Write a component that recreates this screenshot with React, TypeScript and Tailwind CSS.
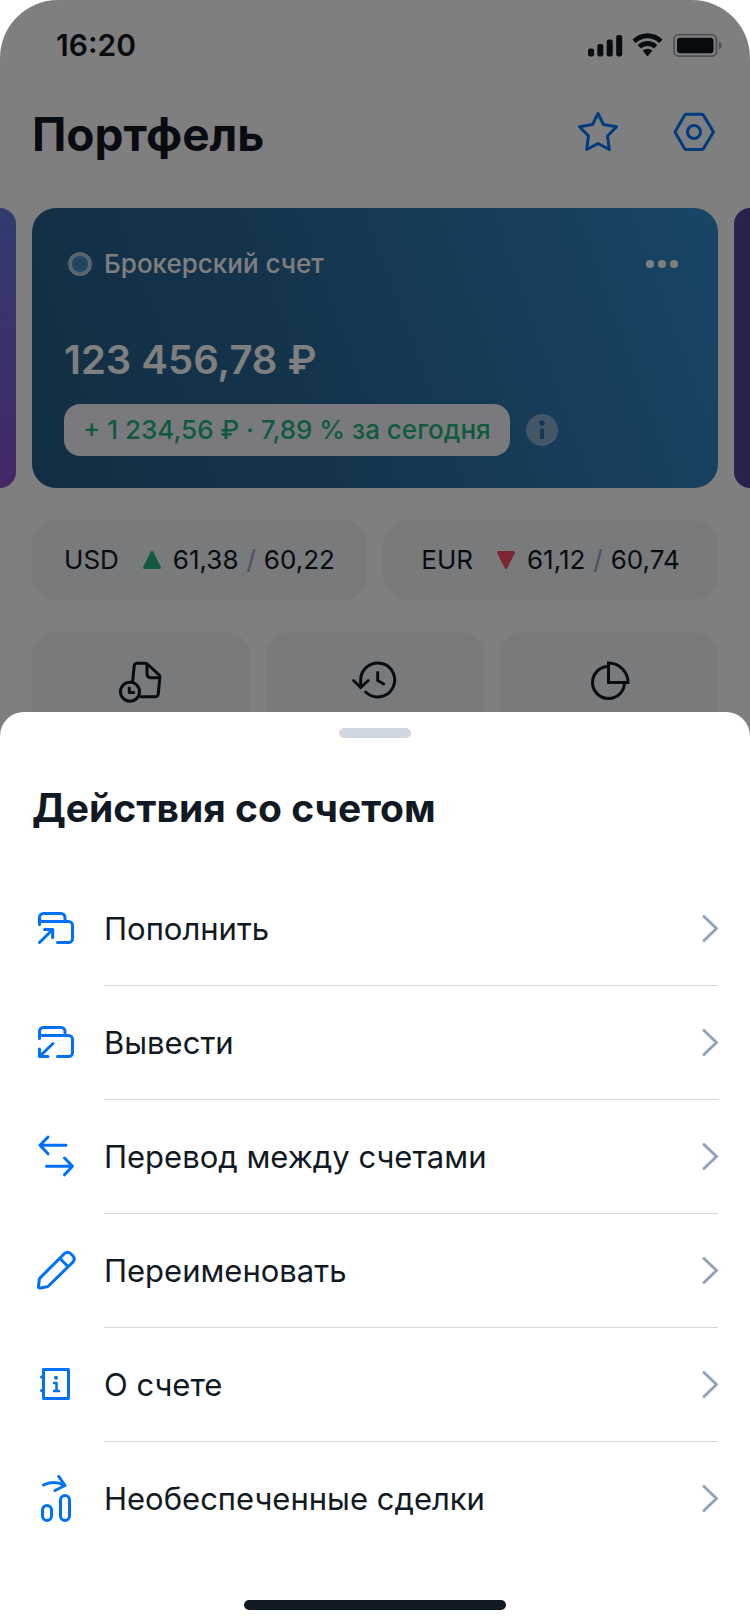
import type { ReactNode } from 'react';

const ink = 'stroke-[3] [stroke-linecap:round] [stroke-linejoin:round]';

function Icon({ children }: { children: ReactNode }) {
  return (
    <svg viewBox="0 0 48 48" fill="none" stroke="currentColor" className={`size-12 shrink-0 ${ink}`} aria-hidden="true">
      {children}
    </svg>
  );
}

const cardOutline = (
  <>
    <path d="M7.5 19.5V12.5a4 4 0 0 1 4-4H29a4 4 0 0 1 4 4V16" />
    <path d="M7.5 13.5a3 3 0 0 0 3 3H36.500a4 4 0 0 1 4 4V33.500a4 4 0 0 1-4 4H25.500" />
  </>
);

const actions = [
  {
    title: 'Пополнить',
    icon: (
      <>
        {cardOutline}
        <path d="M7.500 37.500 20.700 24.500M12.500 24.500h8.200v8" />
      </>
    ),
  },
  {
    title: 'Вывести',
    icon: (
      <>
        {cardOutline}
        <path d="M21 24.500 7.500 37.500M7.500 30v7.500h8.500" />
      </>
    ),
  },
  {
    title: 'Перевод между счетами',
    icon: <path d="M34 12.300H8M16 4 8 12.300l8 8.500M14.500 33.300h25.500M32.500 25l8 8.300-8 8.500" />,
  },
  {
    title: 'Переименовать',
    icon: (
      <>
        <path d="M8 31 32.500 6.500q3-2.600 6 0l2.500 2.500q2.600 3 0 6L16.500 39q-.6.600-1.500.800L8.500 41q-2.200.200-2-2L7.300 32.500q.2-.9.7-1.500Z" />
        <path d="m28 11.500 8 8" />
      </>
    ),
  },
  {
    title: 'О счете',
    icon: (
      <>
        <path d="M11.500 8.500h25v29h-25zM9.500 16h2M9.500 29.500h2" />
        <path d="M22 22h2.500v8M22 30h5" className="stroke-[2.500]" />
        <circle cx="24" cy="16.700" r="2" fill="currentColor" stroke="none" />
      </>
    ),
  },
  {
    title: 'Необеспеченные сделки',
    icon: (
      <>
        <path d="M11.500 10q9.500-5 21 0M26.800 1.500 33 10.500l-10 5" />
        <rect x="10.500" y="30.500" width="9" height="15" rx="4.500" />
        <rect x="28.500" y="20.500" width="9" height="25" rx="4.500" />
      </>
    ),
  },
];

const rates = [
  { code: 'USD', buy: '61,38', sell: '60,22', up: true },
  { code: 'EUR', buy: '61,12', sell: '60,74', up: false },
];

const shortcuts = [
  {
    label: 'Отложенные документы',
    icon: (
      <>
        <circle cx="13" cy="35.700" r="9.500" />
        <path d="M12.300 32v4.500h4.500" />
        <path d="M15.700 25 17.200 10q.3-2.700 3-2.700H28q1.700 0 2.900 1.200L42 18.800q1 1 .9 2.500L41.200 38q-.2 2.700-2.700 2.700H24" />
        <path d="M30 8v9.500q0 4.300 4.300 4.300H42.500" />
      </>
    ),
  },
  {
    label: 'История',
    icon: (
      <>
        <path d="M9.700 31V24A17 17 0 1 1 14.700 36" />
        <path d="m2.500 24.500 7.200 7 7.500-7M26.700 16.500v8l6 3.500" />
      </>
    ),
  },
  {
    label: 'Аналитика',
    icon: (
      <path d="M23.500 10.500a16 16 0 1 0 16 16.500M23.500 7A19.500 19.500 0 0 1 43 26.500H23.500Z" className="[stroke-linecap:butt] [stroke-linejoin:miter]" />
    ),
  },
];

function StatusBar() {
  return (
    <div className="flex h-[90px] items-center justify-between pl-14 pr-7">
      <span className="text-[30px] leading-9 font-semibold">16:20</span>
      <svg viewBox="0 0 134 24" fill="currentColor" className="h-6 w-[134px]" aria-hidden="true">
        <rect x="0" y="15.500" width="6" height="8" rx="2" />
        <rect x="9.300" y="11" width="6" height="12.500" rx="2" />
        <rect x="18.700" y="6.500" width="6" height="17" rx="2" />
        <rect x="28.200" y="2" width="6" height="21.500" rx="2" />
        <path d="M59.500 5.300c4.200 0 8.200 1.600 11.200 4.500.3.200.6.200.8 0l2.700-2.700c.3-.3.300-.6 0-.9a21 21 0 0 0-29.400 0c-.3.300-.3.600 0 .9l2.700 2.700c.2.200.5.200.8 0 3-2.900 7-4.500 11.200-4.500Z" />
        <path d="M59.500 13c2.200 0 4.300.8 6 2.300.3.200.6.200.8 0l2.600-2.700c.3-.3.300-.6 0-.9a13.700 13.700 0 0 0-18.800 0c-.3.300-.3.600 0 .9l2.600 2.700c.2.200.5.200.8 0a9 9 0 0 1 6-2.300Z" />
        <path d="M64 17.300c.3.200.3.600 0 .8l-4 4.900c-.3.300-.7.300-1 0l-4-4.900c-.3-.2-.3-.6 0-.8a7 7 0 0 1 9 0Z" />
        <rect x="86" y="1.700" width="42.500" height="21.500" rx="5" fill="none" stroke="currentColor" strokeWidth="1.800" opacity=".4" />
        <rect x="89" y="4.700" width="36.500" height="15.500" rx="3" />
        <path d="M131 8.500c1.800.8 2.500 2.100 2.500 4s-.7 3.200-2.500 4Z" opacity=".4" />
      </svg>
    </div>
  );
}

function AccountCard() {
  return (
    <section className="flex min-w-0 flex-1 flex-col rounded-3xl bg-[linear-gradient(70deg,#245b84_0%,#29699a_40%,#318bcd_100%)] px-8 pb-8 pt-[38px] text-white">
      <div className="flex items-center justify-between">
        <div className="flex items-center gap-3 pl-1">
          <span className="size-6 rounded-full border-4 border-[#b4c8d8] bg-[#448fc5]" />
          <h2 className="text-[26px] leading-9 font-medium">Брокерский счет</h2>
        </div>
        <button type="button" aria-label="Действия со счетом" className="flex gap-1 p-1 pr-2">
          <span className="size-2 rounded-full bg-white" />
          <span className="size-2 rounded-full bg-white" />
          <span className="size-2 rounded-full bg-white" />
        </button>
      </div>
      <p className="mt-[52px] text-[40px] leading-[52px] font-semibold">123 456,78 ₽</p>
      <div className="mt-[18px] flex items-center gap-4">
        <p className="rounded-2xl bg-[#f4f4fc] px-[19px] text-[26px] leading-[52px] font-medium whitespace-nowrap text-[#20b583]">
          + 1 234,56 ₽ · 7,89 % за сегодня
        </p>
        <button type="button" aria-label="Подробнее" className="size-8">
          <svg viewBox="0 0 32 32" className="size-8" aria-hidden="true">
            <circle cx="16" cy="16" r="16" fill="#86afd0" />
            <circle cx="16" cy="9" r="2.800" fill="#2d72a8" />
            <path d="M14 14.500h4v10.500h-4z" fill="#2d72a8" />
          </svg>
        </button>
      </div>
    </section>
  );
}

function Portfolio() {
  return (
    <main className="col-start-1 row-start-1 overflow-hidden rounded-t-[58px] bg-white">
      <StatusBar />
      <header className="flex h-[84px] items-center justify-between px-8">
        <h1 className="pt-1 text-[46px] leading-[56px] font-bold">Портфель</h1>
        <div className="flex gap-12 text-[#0077ff]">
          <button type="button" aria-label="Избранное">
            <Icon>
              <path d="m24 5.500 5.500 11 13 2.200-9 9.300 1.800 13.500L24 35.500l-11.300 6L14.500 28l-9-9.300 13-2.200Z" />
            </Icon>
          </button>
          <button type="button" aria-label="Настройки">
            <Icon>
              <path d="M5 24 14.500 7.200q.6-1 1.800-1h15.400q1.200 0 1.800 1L43.500 24 33.500 40.500q-.6 1-1.800 1H16.300q-1.200 0-1.800-1Z" />
              <circle cx="24" cy="24" r="6.500" />
            </Icon>
          </button>
        </div>
      </header>

      <div className="-mx-4 mt-[34px] flex gap-4">
        <div className="w-8 rounded-3xl bg-[linear-gradient(165deg,#6078da,#8a50cc)]" />
        <AccountCard />
        <div className="w-8 rounded-3xl bg-[#53449a]" />
      </div>

      <div className="mt-8 grid grid-cols-2 gap-4 px-8 text-[26px] leading-8">
        {rates.map((rate) => (
          <div key={rate.code} className="flex h-20 items-center justify-center rounded-3xl bg-[#f1f4f8]">
            <span>{rate.code}</span>
            <svg viewBox="0 0 18 18" className={`ml-6 mr-3 size-[18px] ${rate.up ? 'fill-[#27b488]' : 'rotate-180 fill-[#fa4b63]'}`} aria-hidden="true">
              <path d="M7.600 1q1.400-2 2.800 0l7.300 14.700q.9 2.300-1.500 2.300H1.800q-2.400 0-1.500-2.300Z" />
            </svg>
            <span>{rate.buy}</span>
            <span className="px-2 text-[#92a4c2]">/</span>
            <span>{rate.sell}</span>
          </div>
        ))}
      </div>

      <div className="mt-8 grid grid-cols-3 gap-4 px-8">
        {shortcuts.map((item) => (
          <button key={item.label} type="button" aria-label={item.label} className="flex h-40 justify-center rounded-3xl bg-[#f1f4f8] pt-6">
            <Icon>{item.icon}</Icon>
          </button>
        ))}
      </div>
    </main>
  );
}

function ActionsSheet() {
  return (
    <section role="dialog" aria-labelledby="sheet-title" className="z-20 col-start-1 row-start-1 self-end rounded-t-3xl bg-white pb-3.5 pt-4">
      <div className="mx-auto h-2.5 w-[72px] rounded-full bg-[#d0d7e1]" />
      <h2 id="sheet-title" className="mt-11 px-8 text-[39px] leading-[52px] font-bold">
        Действия со счетом
      </h2>
      <ul className="mt-[38px] px-8">
        {actions.map((action) => (
          <li key={action.title} className="group">
            <button type="button" className="flex h-[114px] w-full items-center gap-6 text-left">
              <span className="text-[#0070f8]">
                <Icon>{action.icon}</Icon>
              </span>
              <span className="flex h-full flex-1 items-center justify-between border-b border-[#d0d7e1] group-last:border-transparent">
                <span className="text-[31px] leading-10">{action.title}</span>
                <svg viewBox="0 0 16 28" fill="none" stroke="#92a2bc" className={`h-7 w-4 ${ink}`} aria-hidden="true">
                  <path d="m2 1.500 12.500 12L2 25.500" />
                </svg>
              </span>
            </button>
          </li>
        ))}
      </ul>
      <div className="mx-auto mt-11 h-2.5 w-[262px] rounded-full bg-[#111923]" />
    </section>
  );
}

export default function App() {
  return (
    <div className="grid min-h-screen grid-cols-[minmax(0,1fr)] bg-white font-['Inter','Liberation_Sans',sans-serif] text-[#111923]">
      <Portfolio />
      <div className="z-10 col-start-1 row-start-1 rounded-t-[58px] bg-black/50" />
      <ActionsSheet />
    </div>
  );
}
